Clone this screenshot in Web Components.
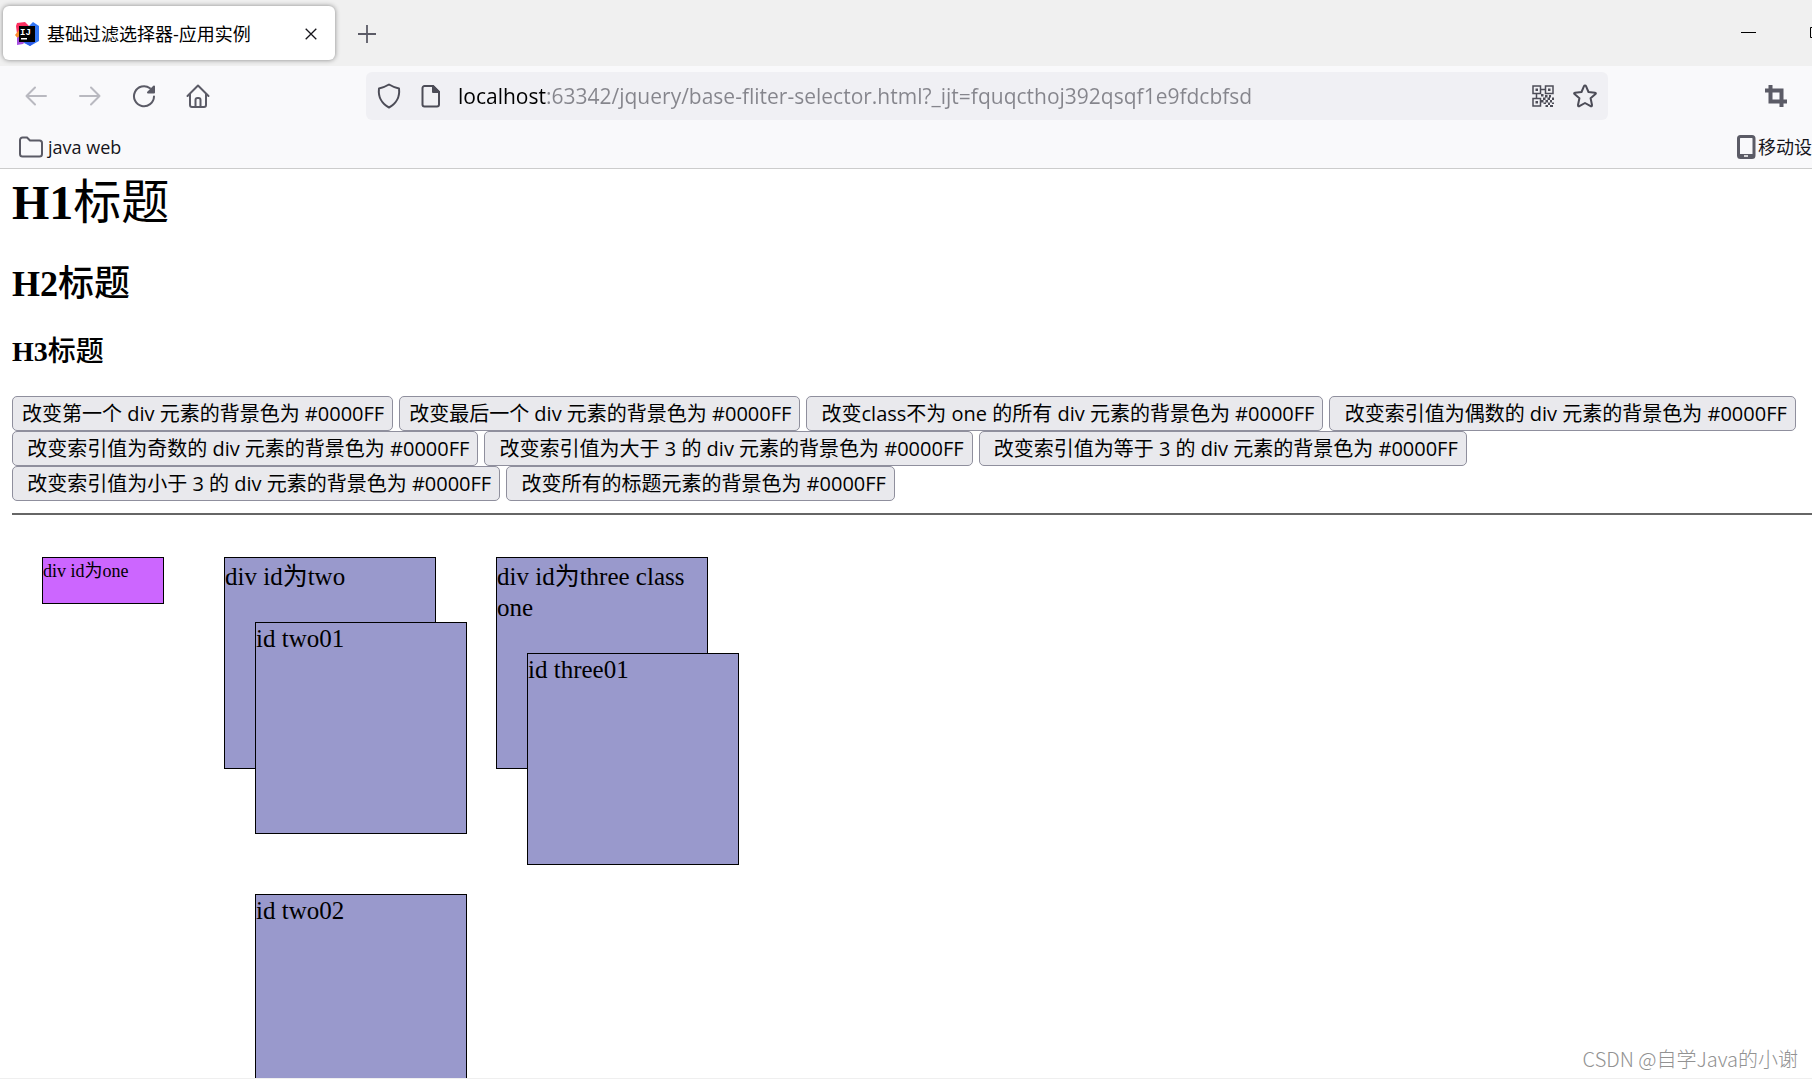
<!DOCTYPE html>
<html lang="zh-CN">
<head>
<meta charset="utf-8">
<title>基础过滤选择器-应用实例</title>
<style>
html, body { margin: 0; height: 100%; }
body { background: #fff; color: #000; overflow: hidden; --ui: "Open Sans", "Noto Sans CJK SC", sans-serif; --icon: #5b5b66; }
</style>
</head>
<body>
<browser-window></browser-window>

<template id="tpl-window">
<style>
:host { display: flex; flex-direction: column; height: 100vh; overflow: hidden; position: relative; }
selector-page { flex: 1; min-height: 0; }
page-credit { position: absolute; right: 14px; bottom: 6px; }
</style>
<tab-strip></tab-strip>
<nav-bar></nav-bar>
<bookmark-bar></bookmark-bar>
<selector-page></selector-page>
<page-credit>CSDN @自学Java的小谢</page-credit>
</template>

<template id="tpl-tabs">
<style>
:host { display: flex; align-items: center; height: 66px; background: #f0f0f0; font: 18px/26px var(--ui); overflow: hidden; }
.tab { box-sizing: border-box; display: flex; align-items: center; gap: 8px; width: 332px; height: 54px; margin-left: 3px; padding: 1px 12px 0 12px; background: #fff; border-radius: 6px; box-shadow: 0 0 5px rgba(0,0,0,.45); }
.title { flex: 1; white-space: nowrap; }
button { display: flex; align-items: center; justify-content: center; flex: none; width: 24px; height: 24px; padding: 0; border: 0; background: none; color: #15141a; }
svg { display: block; flex: none; }
.new { margin-left: 20px; padding-top: 2px; color: var(--icon); }
.win { width: 46px; color: #000; }
.spacer { flex: 1; }
.max { margin-right: -27px; margin-left: 21px; }
</style>
<div class="tab">
<svg width="24" height="24" viewBox="0 0 24 24" aria-hidden="true">
<path d="M1 4 2 1l8-1 5 5-4 9-9-2z" fill="#fc2f60"/><path d="M0 13 4 8l8 6-2 6-6-2z" fill="#fb8c2e"/>
<path d="M2 16l4-3 7 4-5 5-6 1z" fill="#a64ee0"/><path d="M14 4 18 0l6 4v15l-9 5-6-3z" fill="#3477f5"/><path d="M9 20 20 20 15 24z" fill="#2d5be8"/>
<path d="M4 4h16v16H4z"/><text x="5" y="13" font-family="Liberation Mono" font-weight="700" font-size="9" fill="#fff">IJ</text><path d="M6 16h6v1.500H6z" fill="#fff"/></svg>
<span class="title">基础过滤选择器-应用实例</span>
<button aria-label="Close tab"><svg width="12" height="12" viewBox="0 0 12 12"><path d="M.7.700 11.300 11.300M11.300.700.700 11.300" stroke="currentColor" stroke-width="1.300"/></svg></button>
</div>
<button class="new" aria-label="New tab"><svg width="18" height="18" viewBox="0 0 18 18"><path d="M9 0v18M0 9h18" stroke="currentColor" stroke-width="1.800"/></svg></button>
<span class="spacer"></span>
<button class="win" aria-label="Minimize"><svg width="16" height="2" viewBox="0 0 16 2"><path d="M0 .5h15" stroke="currentColor"/></svg></button>
<button class="win max" aria-label="Maximize"><svg width="12" height="12" viewBox="0 0 12 12"><path d="M.5.500h10v10H.5z" fill="none" stroke="currentColor"/></svg></button>
</template>

<template id="tpl-nav">
<style>
:host { display: flex; align-items: center; height: 60px; background: #f9f9fb; padding: 0 22px 0 9px; box-sizing: border-box; color: var(--icon); }
button { display: flex; align-items: center; justify-content: center; flex: none; padding: 0; border: 0; width: 54px; height: 40px; background: none; color: inherit; }
button:disabled { color: #b9b9c0; }
svg { display: block; flex: none; fill: none; stroke: currentColor; stroke-width: 2; stroke-linecap: round; stroke-linejoin: round; }
form { flex: 1; min-width: 0; display: flex; align-items: center; height: 48px; margin: 0 154px 0 141px; padding: 0 2px; box-sizing: border-box; border-radius: 6px; background: #f0f0f4; color: #4c4c57; }
form button { width: 42px; }
input { flex: 1; min-width: 0; border: 0; outline: 0; margin: 0; padding: 0 0 0 6px; height: 36px; font: 21px/30px var(--ui); background: linear-gradient(90deg, #000 95px, #85858c 95px); -webkit-background-clip: text; background-clip: text; color: transparent; }
.crop { width: 28px; }
</style>
<button disabled aria-label="Back"><svg width="22" height="20" viewBox="0 0 22 20"><path d="M21 10H1.500M10 1.500 1.500 10l8.500 8.500"/></svg></button>
<button disabled aria-label="Forward"><svg width="22" height="20" viewBox="0 0 22 20"><path d="M1 10h19.500M12 1.500l8.500 8.500-8.500 8.500"/></svg></button>
<button aria-label="Reload"><svg width="24" height="24" viewBox="0 0 24 24"><path d="M22 12.500a10 10 0 1 1-4-8.300"/><path d="M22 2.500v6h-6z" fill="currentColor"/></svg></button>
<button aria-label="Home"><svg width="24" height="24" viewBox="0 0 24 24"><path d="M1.500 12 12 1.500 22.500 12M4 10v11a2 2 0 0 0 2 2h12a2 2 0 0 0 2-2V10M9.500 22.500V16a2 2 0 0 1 2-2h1a2 2 0 0 1 2 2v6.500"/></svg></button>
<form>
<button type="button" aria-label="Tracking protection"><svg width="24" height="26" viewBox="0 0 24 26"><path d="M12 1.500Q17 4.500 22 5.500C23 14 19 21 12 24.500 5 21 1 14 2 5.500Q7 4.500 12 1.500z"/></svg></button>
<button type="button" aria-label="Site information"><svg width="20" height="24" viewBox="0 0 20 24"><path d="M3.500 2H12l6 6v12.500a2 2 0 0 1-2 2H3.500a2 2 0 0 1-2-2V4a2 2 0 0 1 2-2z"/><path d="M12 2v6h6z" fill="currentColor"/></svg></button>
<input aria-label="Address" spellcheck="false" value="localhost:63342/jquery/base-fliter-selector.html?_ijt=fquqcthoj392qsqf1e9fdcbfsd">
<button type="button" aria-label="QR code"><svg width="22" height="22" viewBox="0 0 22 22" style="stroke-width:1.5;stroke-linecap:butt;stroke-linejoin:miter"><path d="M1 1h7.500v7.500H1zM13.500 1H21v7.500h-7.500zM1 13.500h7.500V21H1zM8.500 4.500h5M4.500 8.500v5"/><g fill="currentColor" stroke="none"><path d="M3.500 3.500H6V6H3.500zM16 3.500h2.500V6H16zM3.500 16H6v2.500H3.500z"/><path d="M9 9h2.500v2.500H9zM13 10h2.500v2.500H13zM17 10h2v2.500h-2zM11 12.500h2.500V15H11zM15.500 12.500H18V15h-2.500zM20 12.500h2V15h-2zM9 15h2.500v2.500H9zM13.500 15H16v2.500h-2.500zM18 15h2v2.500h-2zM11.500 17.500H14V19h-2.500zM16 17.500h2V20h-2zM20 17.500h2V19h-2zM13.500 20H16v2h-2.500zM18 20h3v2h-3z"/></g></svg></button>
<button type="button" aria-label="Bookmark this page"><svg width="24" height="24" viewBox="0 0 24 24"><path d="M12 1.500Q12.700 1.500 13 2.200L15.500 8l6.500.700Q23.400 9 22.500 10L17.600 14.200 19 21Q19 22.700 17.600 22.200L12 19 6.400 22.200Q5 22.700 5 21L6.400 14.200 1.500 10Q.6 9 2 8.700L8.500 8 11 2.200Q11.300 1.500 12 1.500z"/></svg></button>
</form>
<button class="crop" aria-label="Screenshot"><svg width="22" height="22" viewBox="0 0 22 22" style="stroke-width:4;stroke-linecap:butt;stroke-linejoin:miter"><path d="M5.500 0v16.500H22M0 5.500h16.500V22"/></svg></button>
</template>

<template id="tpl-bookmarks">
<style>
:host { display: flex; justify-content: space-between; align-items: center; box-sizing: border-box; height: 43px; padding: 0 0 0 18px; background: #f9f9fb; border-bottom: 1px solid #ccc; font: 18px/26px var(--ui); color: #15141a; }
button { display: flex; align-items: center; gap: 5px; padding: 0; border: 0; background: none; font: inherit; color: inherit; white-space: nowrap; }
.device { gap: 2px; }
svg { display: block; color: var(--icon); fill: none; stroke: currentColor; stroke-width: 2; }
</style>
<button><svg width="25" height="22" viewBox="0 0 25 22"><path d="M2 4a2.500 2.500 0 0 1 2.500-2.500H9l3 3h9.500A2.500 2.500 0 0 1 24 7v11a2.500 2.500 0 0 1-2.500 2.500h-17A2.500 2.500 0 0 1 2 18z"/></svg>java web</button>
<button class="device"><svg width="19" height="24" viewBox="0 0 19 24"><rect x="1.500" y="1.500" width="15.500" height="21" rx="2" stroke-width="3"/><path d="M1 20.500h16.500" stroke-width="3"/><path d="M7 21h4" stroke="#fff" stroke-width="1.500"/></svg>移动设</button>
</template>

<template id="tpl-page">
<style>
:host { display: block; overflow: hidden; box-sizing: border-box; padding: 6px 0 0 12px; border-bottom: 1px solid #efefef; font-family: "Liberation Serif", "Noto Sans CJK SC", serif; }
h1, h2, h3 { margin: 0; font-weight: 700; }
h1 { font-size: 48px; line-height: 56px; margin-bottom: 32px; }
h2 { font-size: 36px; line-height: 42px; margin-bottom: 31px; }
h3 { font-size: 28px; line-height: 32px; margin-bottom: 28px; }
h1 span { font-weight: 400; }
h2 span, h3 span { font-weight: 500; }
.actions { display: flex; flex-wrap: wrap; gap: 0 6px; }
hr { margin: 12px 0; border: 0; height: 2px; background: #666; }
.boxes { display: flex; align-items: flex-start; }
</style>
<h1>H1<span>标题</span></h1>
<h2>H2<span>标题</span></h2>
<h3>H3<span>标题</span></h3>
<div class="actions">
<action-button>改变第一个 div 元素的背景色为 #0000FF</action-button>
<action-button>改变最后一个 div 元素的背景色为 #0000FF</action-button>
<action-button>&nbsp;改变class不为 one 的所有 div 元素的背景色为 #0000FF</action-button>
<action-button>&nbsp;改变索引值为偶数的 div 元素的背景色为 #0000FF</action-button>
<action-button>&nbsp;改变索引值为奇数的 div 元素的背景色为 #0000FF</action-button>
<action-button>&nbsp;改变索引值为大于 3 的 div 元素的背景色为 #0000FF</action-button>
<action-button>&nbsp;改变索引值为等于 3 的 div 元素的背景色为 #0000FF</action-button>
<action-button>&nbsp;改变索引值为小于 3 的 div 元素的背景色为 #0000FF</action-button>
<action-button>&nbsp;改变所有的标题元素的背景色为 #0000FF</action-button>
</div>
<hr>
<div class="boxes">
<demo-box mini label="div id为one"></demo-box>
<demo-box outer label="div id为two"><demo-box label="id two01"></demo-box><demo-box label="id two02"></demo-box></demo-box>
<demo-box outer label="div id为three class one"><demo-box label="id three01"></demo-box></demo-box>
</div>
</template>

<template id="tpl-action">
<style>
:host { display: block; }
button { display: block; box-sizing: border-box; height: 35px; margin: 0; padding: 0 8px 0 9px; border: 1px solid #8f8f9d; border-radius: 5px; background: #e9e9ed; color: #000; font: 20px/33px var(--ui); white-space: nowrap; }
</style>
<button><slot></slot></button>
</template>

<template id="tpl-box">
<style>
:host { display: flex; flex-direction: column; flex: none; width: 210px; height: 210px; margin: 30px; border: 1px solid #000; background: #99c; font-size: 25px; line-height: 31px; }
:host([outer]) .label { padding-top: 3px; }
:host([mini]) { width: 120px; height: 45px; background: #c6f; font-size: 18px; line-height: 27px; }
</style>
<div class="label"></div><slot></slot>
</template>

<template id="tpl-credit">
<style>
:host { display: block; font: 20px/28px "Noto Sans CJK SC", sans-serif; font-weight: 300; color: #929292; white-space: nowrap; }
</style>
<slot></slot>
</template>

<script>
const define = (name, id, setup) => customElements.define(name, class extends HTMLElement {
  constructor() {
    super();
    this.attachShadow({ mode: "open" });
  }
  connectedCallback() {
    if (this.shadowRoot.childNodes.length) return;
    this.shadowRoot.append(document.getElementById(id).content.cloneNode(true));
    if (setup) setup(this);
  }
});
define("demo-box", "tpl-box", el => {
  el.shadowRoot.querySelector(".label").textContent = el.getAttribute("label");
});
define("action-button", "tpl-action");
define("page-credit", "tpl-credit");
define("tab-strip", "tpl-tabs");
define("nav-bar", "tpl-nav");
define("bookmark-bar", "tpl-bookmarks");
define("selector-page", "tpl-page");
define("browser-window", "tpl-window");
</script>
</body>
</html>
